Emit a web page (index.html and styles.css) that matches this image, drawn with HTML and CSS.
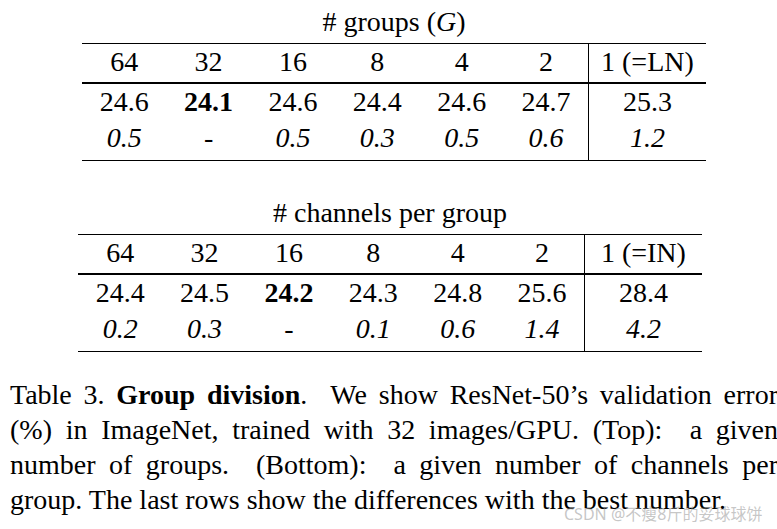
FILE: index.html
```html
<!DOCTYPE html>
<html>
<head>
<meta charset="utf-8">
<link rel="stylesheet" href="styles.css">
</head>
<body>
<div class="page">
  <section class="block block-top">
    <div class="title"># groups (<i>G</i>)</div>
    <table class="grid">
      <colgroup><col class="c"><col class="c"><col class="c"><col class="c"><col class="c"><col class="c"><col class="last"></colgroup>
      <tr class="head"><td>64</td><td>32</td><td>16</td><td>8</td><td>4</td><td>2</td><td class="sep">1 (=LN)</td></tr>
      <tr class="r1"><td>24.6</td><td><b>24.1</b></td><td>24.6</td><td>24.4</td><td>24.6</td><td>24.7</td><td class="sep">25.3</td></tr>
      <tr class="r2"><td><i>0.5</i></td><td>-</td><td><i>0.5</i></td><td><i>0.3</i></td><td><i>0.5</i></td><td><i>0.6</i></td><td class="sep"><i>1.2</i></td></tr>
    </table>
  </section>
  <section class="block block-bottom">
    <div class="title"># channels per group</div>
    <table class="grid">
      <colgroup><col class="c"><col class="c"><col class="c"><col class="c"><col class="c"><col class="c"><col class="last"></colgroup>
      <tr class="head"><td>64</td><td>32</td><td>16</td><td>8</td><td>4</td><td>2</td><td class="sep">1 (=IN)</td></tr>
      <tr class="r1"><td>24.4</td><td>24.5</td><td><b>24.2</b></td><td>24.3</td><td>24.8</td><td>25.6</td><td class="sep">28.4</td></tr>
      <tr class="r2"><td><i>0.2</i></td><td><i>0.3</i></td><td>-</td><td><i>0.1</i></td><td><i>0.6</i></td><td><i>1.4</i></td><td class="sep"><i>4.2</i></td></tr>
    </table>
  </section>
  <p class="caption">
    <span class="line">Table 3. <b>Group division</b>.&nbsp; We show ResNet-50’s validation error</span>
    <span class="line">(%) in ImageNet, trained with 32 images/GPU. (Top):&nbsp; a given</span>
    <span class="line">number of groups.&nbsp; (Bottom):&nbsp; a given number of channels per</span>
    <span class="line last-line">group. The last rows show the differences with the best number.</span>
  </p>
  <div class="watermark">CSDN @不瘦8斤的妥球球饼</div>
</div>
</body>
</html>
```
FILE: styles.css
```css
html, body {
  margin: 0;
  padding: 0;
  overflow: hidden;
  background: #fff;
}
body {
  font-family: "Liberation Serif", "Times New Roman", serif;
  font-size: 28px;
  color: #000;
  width: 777px;
  height: 529px;
}
.page {
  position: relative;
  width: 777px;
  height: 529px;
}
.block {
  width: 624px;
}
.block-top {
  margin-left: 82px;
}
.block-bottom {
  margin-left: 78px;
  margin-top: 30px;
}
.title {
  text-align: center;
  line-height: 43px;
  height: 43px;
}
.grid {
  border-collapse: collapse;
  table-layout: fixed;
  width: 624px;
  border-top: 1px solid #000;
  border-bottom: 1px solid #000;
}
.grid col.c {
  width: 84.4px;
}
.grid td {
  padding: 0;
  text-align: center;
  white-space: nowrap;
}
.grid td.sep {
  border-left: 1px solid #000;
}
.grid tr.head td {
  line-height: 34px;
  padding-top: 1px;
  padding-bottom: 3px;
  border-bottom: 2px solid #000;
}
.grid tr.r1 td {
  line-height: 36px;
}
.grid tr.r2 td {
  line-height: 36px;
  padding-bottom: 4px;
}
.caption {
  margin: 25px 0 0 10px;
  width: 768px;
  line-height: 35px;
}
.caption .line {
  display: block;
  text-align: justify;
  text-align-last: justify;
}
.caption .last-line {
  text-align: left;
  text-align-last: left;
}
.watermark {
  position: absolute;
  left: 564px;
  top: 504px;
  font-family: "Noto Sans", "Noto Sans CJK SC", sans-serif;
  font-size: 16px;
  line-height: 20px;
  color: rgba(150, 150, 150, 0.55);
  white-space: nowrap;
}
```
